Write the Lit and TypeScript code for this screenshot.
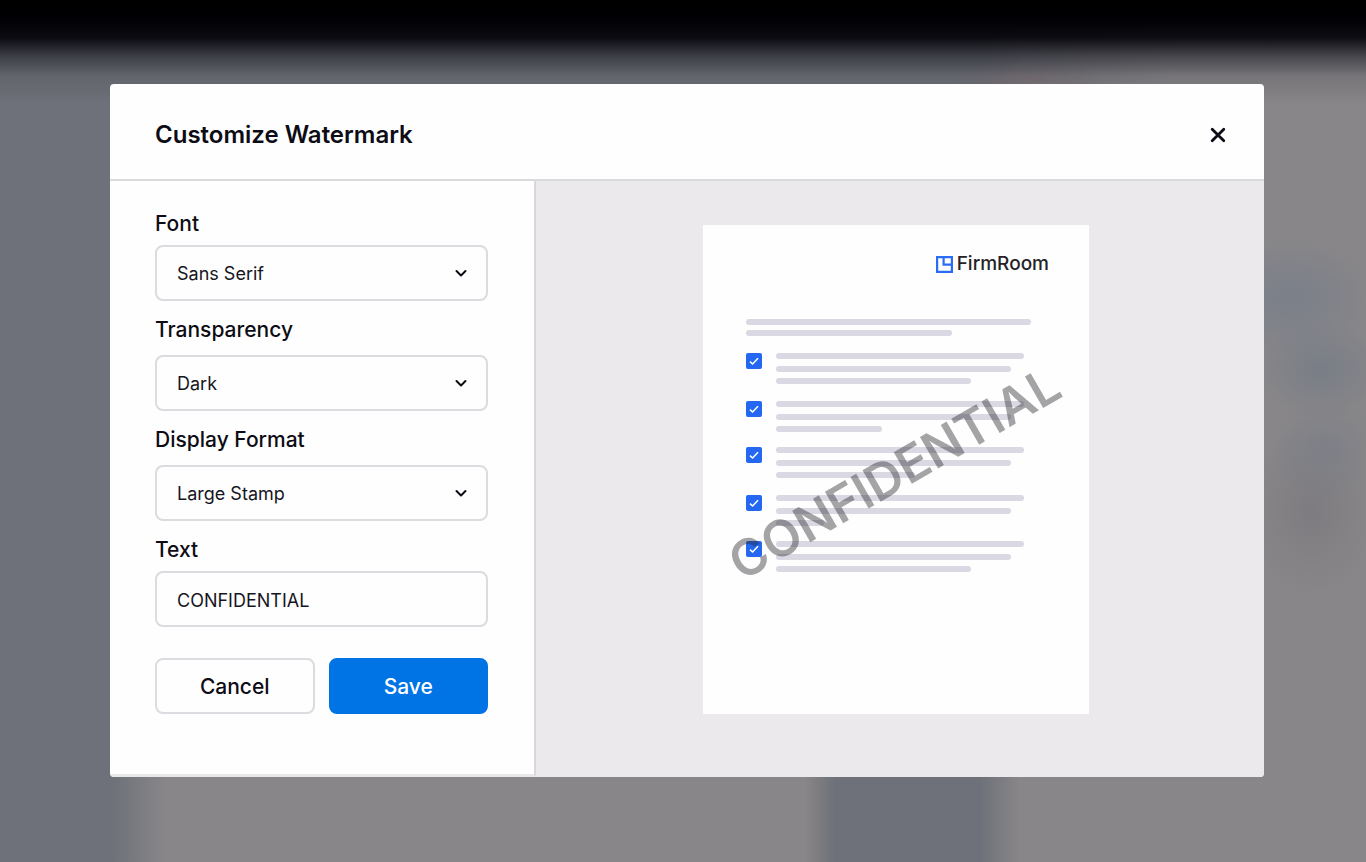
import { LitElement, html, css } from "lit";
import { customElement, state } from "lit/decorators.js";

interface SelectField {
  id: string;
  label: string;
  options: string[];
}

const FIELDS: SelectField[] = [
  { id: "font", label: "Font", options: ["Sans Serif", "Serif", "Monospace"] },
  { id: "transparency", label: "Transparency", options: ["Dark", "Medium", "Light"] },
  { id: "format", label: "Display Format", options: ["Large Stamp", "Header", "Footer"] },
];

/* Line widths of each checklist entry, as a share of the text column. */
const CHECKLIST: number[][] = [
  [91, 86, 71.5],
  [91, 86, 39],
  [91, 86, 51],
  [91, 86, 17.5],
  [91, 86, 71.5],
];

@customElement("document-preview")
export class DocumentPreview extends LitElement {
  static properties = { stamp: { type: String } };
  declare stamp: string;

  static styles = css`
    :host {
      display: block;
      flex: 0 1 386px;
      min-width: 0;
    }
    .sheet {
      position: relative;
      box-sizing: border-box;
      min-height: 489px;
      padding: 29px 40px 40px 43px;
      background: #fefefe;
      overflow: hidden;
    }
    .brand {
      display: flex;
      justify-content: flex-end;
      align-items: center;
      gap: 4px;
      height: 20px;
      color: #232226;
      font-size: 19px;
      line-height: 20px;
      font-weight: 500;
    }
    .mark {
      width: 17px;
      height: 17px;
    }
    .intro {
      display: grid;
      gap: 5px;
      margin: 45px 0 17px;
    }
    .line {
      height: 6px;
      border-radius: 3px;
      background: #d9d8e3;
    }
    .list {
      margin: 0;
      padding: 0;
      list-style: none;
    }
    .item {
      display: flex;
      align-items: flex-start;
      gap: 14px;
      margin-bottom: 15px;
    }
    .item:nth-child(odd) {
      margin-bottom: 17px;
    }
    .tick {
      appearance: none;
      flex: none;
      width: 16px;
      height: 16px;
      margin: 0;
      border-radius: 2px;
      background: #2468f2;
    }
    .tick:checked {
      background: #2468f2
        url("data:image/svg+xml,%3Csvg xmlns='http://www.w3.org/2000/svg' viewBox='0 0 16 16'%3E%3Cpath d='M4 8.6 6.6 11 12 5.2' fill='none' stroke='white' stroke-width='1.5'/%3E%3C/svg%3E");
    }
    .lines {
      display: flex;
      flex: 1;
      flex-direction: column;
      justify-content: space-between;
      height: 31px;
    }
    .stamp {
      position: absolute;
      inset: 6px 4px 0 0;
      display: grid;
      place-items: center;
      pointer-events: none;
    }
    .stamp-text {
      color: rgba(40, 38, 44, 0.42);
      font-size: 50px;
      line-height: 50px;
      font-weight: 600;
      white-space: nowrap;
      transform: rotate(-30deg);
    }
  `;

  render() {
    return html`
      <div class="sheet">
        <div class="brand">
          <svg class="mark" viewBox="0 0 17 17" fill="none" stroke="#2a6cf5" stroke-width="2.2" aria-hidden="true">
            <path d="M1.1 1.1h14.8v14.8H1.1zM7.6 1v7.6H16" />
          </svg>
          <span>FirmRoom</span>
        </div>
        <div class="intro">
          <div class="line" style="width:94%"></div>
          <div class="line" style="width:68%"></div>
        </div>
        <ul class="list">
          ${CHECKLIST.map(
            (lines, i) => html`<li class="item">
              <input class="tick" type="checkbox" checked aria-label=${`Item ${i + 1}`} />
              <div class="lines">
                ${lines.map((w) => html`<div class="line" style="width:${w}%"></div>`)}
              </div>
            </li>`
          )}
        </ul>
        <div class="stamp"><span class="stamp-text">${this.stamp}</span></div>
      </div>
    `;
  }
}

@customElement("app-root")
export class AppRoot extends LitElement {
  @state() private text = "CONFIDENTIAL";

  static styles = css`
    :host {
      display: block;
      box-sizing: border-box;
      min-height: 100vh;
      padding: 84px 102px 84px 110px;
      font-family: Inter, "Liberation Sans", sans-serif;
      color: #0d0c14;
      background:
        linear-gradient(#000 0, #010004 20px, rgba(4, 3, 9, 0.92) 38px, rgba(30, 30, 38, 0.62) 56px, rgba(60, 60, 68, 0.24) 76px, rgba(90, 90, 96, 0) 104px),
        radial-gradient(80px 20px at 1030px 80px, rgba(130, 108, 108, 0.4), transparent),
        radial-gradient(85px 60px at 1290px 298px, rgba(120, 126, 138, 0.7) 20%, transparent),
        radial-gradient(65px 50px at 1322px 369px, rgba(116, 123, 134, 0.7) 10%, transparent),
        radial-gradient(55px 50px at 1325px 448px, rgba(120, 125, 135, 0.6), transparent),
        radial-gradient(65px 85px at 1312px 510px, rgba(118, 117, 122, 0.6), transparent),
        linear-gradient(90deg, #6e7179 0 820px, #6e7179 940px, transparent 1170px) 0 0 / 100% 100px no-repeat,
        linear-gradient(90deg, #6e7179 0 112px, #888688 165px 805px, #6e7179 835px 980px, #888688 1020px);
    }
    .dialog {
      border-radius: 4px;
      background: #fefefe;
      overflow: hidden;
    }
    .header {
      display: flex;
      align-items: center;
      justify-content: space-between;
      padding: 35px 30px 28px 45px;
      border-bottom: 2px solid #dadadc;
    }
    .title {
      margin: 0;
      font-size: 24px;
      line-height: 32px;
      font-weight: 600;
    }
    .close {
      display: grid;
      place-items: center;
      width: 32px;
      height: 32px;
      padding: 0;
      border: 0;
      background: none;
      color: inherit;
    }
    .body {
      display: flex;
    }
    .form {
      box-sizing: border-box;
      flex: 0 0 426px;
      padding: 29px 46px 60px 45px;
      border-right: 2px solid #d8d7db;
      border-bottom: 3px solid #e8e7ea;
    }
    .field {
      display: grid;
      gap: 11px;
      margin-bottom: 15px;
    }
    .field.compact {
      gap: 7px;
    }
    .label {
      font-size: 21px;
      line-height: 28px;
      font-weight: 450;
    }
    .control {
      display: grid;
      align-items: center;
    }
    .control > * {
      grid-area: 1 / 1;
    }
    .input {
      appearance: none;
      box-sizing: border-box;
      width: 100%;
      height: 56px;
      margin: 0;
      padding: 2px 20px 0;
      border: 2px solid #dcdbdf;
      border-radius: 8px;
      background: transparent;
      color: #16151d;
      font: 400 18px/24px Inter, "Liberation Sans", sans-serif;
      outline: none;
    }
    .chevron {
      justify-self: end;
      margin-right: 20px;
      pointer-events: none;
    }
    .actions {
      display: grid;
      grid-template-columns: 1fr 1fr;
      gap: 14px;
      margin-top: 31px;
    }
    .button {
      box-sizing: border-box;
      height: 56px;
      padding: 2px 0 0;
      border: 2px solid #dcdbdf;
      border-radius: 8px;
      background: transparent;
      color: inherit;
      font: 450 21px/28px Inter, "Liberation Sans", sans-serif;
    }
    .button.primary {
      border-color: #0073e5;
      background: #0073e5;
      color: #fff;
    }
    .preview {
      display: flex;
      flex: 1;
      align-items: flex-start;
      justify-content: center;
      min-width: 0;
      padding: 44px 44px 63px 36px;
      background: #ebe9ec;
    }
  `;

  private onInput(e: Event) {
    this.text = (e.target as HTMLInputElement).value;
  }

  render() {
    return html`
      <section class="dialog" role="dialog" aria-labelledby="title">
        <header class="header">
          <h1 class="title" id="title">Customize Watermark</h1>
          <button class="close" type="button" aria-label="Close">
            <svg width="16" height="16" viewBox="0 0 16 16" fill="none" stroke="currentColor" stroke-width="2.8" stroke-linecap="round" aria-hidden="true">
              <path d="M2.2 2.2 13.8 13.8M13.8 2.2 2.2 13.8" />
            </svg>
          </button>
        </header>
        <div class="body">
          <form class="form" @submit=${(e: Event) => e.preventDefault()}>
            ${FIELDS.map(
              (f, i) => html`<div class="field ${i === 0 ? "compact" : ""}">
                <label class="label" for=${f.id}>${f.label}</label>
                <div class="control">
                  <select class="input" id=${f.id}>
                    ${f.options.map((o) => html`<option>${o}</option>`)}
                  </select>
                  <svg class="chevron" width="14" height="10" viewBox="0 0 14 10" fill="none" stroke="#0d0c14" stroke-width="2" stroke-linecap="round" stroke-linejoin="round" aria-hidden="true">
                    <path d="M2.5 3 7 7.5 11.5 3" />
                  </svg>
                </div>
              </div>`
            )}
            <div class="field compact">
              <label class="label" for="text">Text</label>
              <input class="input" id="text" type="text" .value=${this.text} @input=${this.onInput} />
            </div>
            <div class="actions">
              <button class="button" type="button">Cancel</button>
              <button class="button primary" type="submit">Save</button>
            </div>
          </form>
          <div class="preview">
            <document-preview .stamp=${this.text}></document-preview>
          </div>
        </div>
      </section>
    `;
  }
}
